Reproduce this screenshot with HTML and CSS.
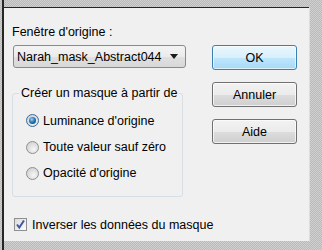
FILE: index.html
```html
<!DOCTYPE html>
<html>
<head>
<meta charset="utf-8">
<title>Masque</title>
<link rel="stylesheet" href="styles.css">
</head>
<body>
<div class="screen">
  <div class="dialog">
    <div class="main">
      <div class="left">
        <div class="caption">Fenêtre d'origine :</div>
        <div class="select">
          <span class="value">Narah_mask_Abstract044</span>
          <span class="arrow"></span>
        </div>
        <fieldset class="group">
          <legend>Créer un masque à partir de</legend>
          <div class="radio on first"><span class="dot"></span>Luminance d'origine</div>
          <div class="radio"><span class="dot"></span>Toute valeur sauf zéro</div>
          <div class="radio"><span class="dot"></span>Opacité d'origine</div>
        </fieldset>
      </div>
      <div class="buttons">
        <div class="btn default">OK</div>
        <div class="btn">Annuler</div>
        <div class="btn">Aide</div>
      </div>
    </div>
    <div class="check">
      <span class="box">
        <svg width="11" height="11" viewBox="0 0 11 11"><path d="M2 5.5 L4.3 8.5 L9 1.5" fill="none" stroke="#3d5aa8" stroke-width="2"/></svg>
      </span>
      Inverser les données du masque
    </div>
  </div>
</div>
</body>
</html>
```

FILE: styles.css
```css
html, body {
	margin: 0;
	height: 100%;
}
body {
	background-color: #c6c6c6;
	background-image: conic-gradient(#bababa 25%, #d0d0d0 0 50%, #bababa 0 75%, #d0d0d0 0);
	background-size: 2px 2px;
	font-family: "Liberation Sans", Arial, sans-serif;
	font-size: 12.5px;
	color: #000;
	overflow: hidden;
}
.screen {
	margin-left: 2px;
	border-left: 2px solid #262626;
	height: 250px;
	padding-top: 7px;
	box-sizing: border-box;
}
.dialog {
	width: 305px;
	height: 234px;
	border-top: 1px solid #262626;
	background: #f0f0f0;
	padding: 17px 0 0 8px;
	box-sizing: border-box;
	box-shadow: 1px 0 0 #dcdcdc;
}
.main {
	display: flex;
}
.left {
	width: 174px;
}
.caption {
	height: 15px;
	line-height: 15px;
}
.select {
	margin: 5px 0 0 1px;
	width: 173px;
	height: 23px;
	box-sizing: border-box;
	border: 1px solid #8a8a8a;
	border-radius: 3px;
	background: linear-gradient(#f4f4f4, #ebebeb 50%, #e0e0e0 51%, #d8d8d8);
	display: flex;
	align-items: center;
	padding-left: 3px;
}
.select .value {
	flex: 1;
}
.select .arrow {
	width: 0;
	height: 0;
	border-left: 4px solid transparent;
	border-right: 4px solid transparent;
	border-top: 5px solid #1a1a1a;
	margin-right: 7px;
}
.group {
	margin: 18px 0 0 0;
	width: 171px;
	box-sizing: border-box;
	border: 1px solid #d5dfe5;
	border-radius: 3px;
	padding: 6px 0 10px 6px;
	min-width: 0;
}
.group legend {
	padding: 0 2px;
	white-space: nowrap;
	line-height: 15px;
}
.radio {
	height: 26px;
	display: flex;
	align-items: center;
	margin-left: 7px;
}
.radio.first {
	height: 27px;
}
.radio .dot {
	width: 13px;
	height: 13px;
	box-sizing: border-box;
	border: 1px solid #8f8f8f;
	border-radius: 50%;
	background: radial-gradient(circle at 60% 65%, #f6f6f6, #d6d6d6 70%);
	margin-right: 4px;
	position: relative;
}
.radio.on .dot {
	border-color: #3a6a9a;
}
.radio.on .dot::after {
	content: "";
	position: absolute;
	left: 2px;
	top: 2px;
	width: 7px;
	height: 7px;
	border-radius: 50%;
	background: radial-gradient(circle at 40% 35%, #9fd3f4, #2a78b8 45%, #0c3a66 100%);
}
.buttons {
	margin: 20px 0 0 26px;
	display: flex;
	flex-direction: column;
	gap: 12px;
}
.btn {
	width: 85px;
	height: 25px;
	box-sizing: border-box;
	border: 1px solid #707070;
	border-radius: 3px;
	background: linear-gradient(#f2f2f2, #ebebeb 50%, #dddddd 51%, #cfcfcf);
	box-shadow: inset 0 0 0 1px rgba(255,255,255,0.7);
	display: flex;
	align-items: center;
	justify-content: center;
}
.btn.default {
	border-color: #3c7fb1;
	background: linear-gradient(#eaf6fd, #d9f0fc 50%, #bee6fd 51%, #a7d9f5);
	box-shadow: inset 0 0 0 1px rgba(255,255,255,0.6);
}
.check {
	margin: 20px 0 0 2px;
	display: flex;
	align-items: center;
	height: 15px;
}
.check .box {
	width: 13px;
	height: 13px;
	box-sizing: border-box;
	border: 1px solid #8f8f8f;
	background: linear-gradient(135deg, #dcdcdc, #fdfdfd);
	margin-right: 5px;
	display: flex;
	align-items: center;
	justify-content: center;
}
```
